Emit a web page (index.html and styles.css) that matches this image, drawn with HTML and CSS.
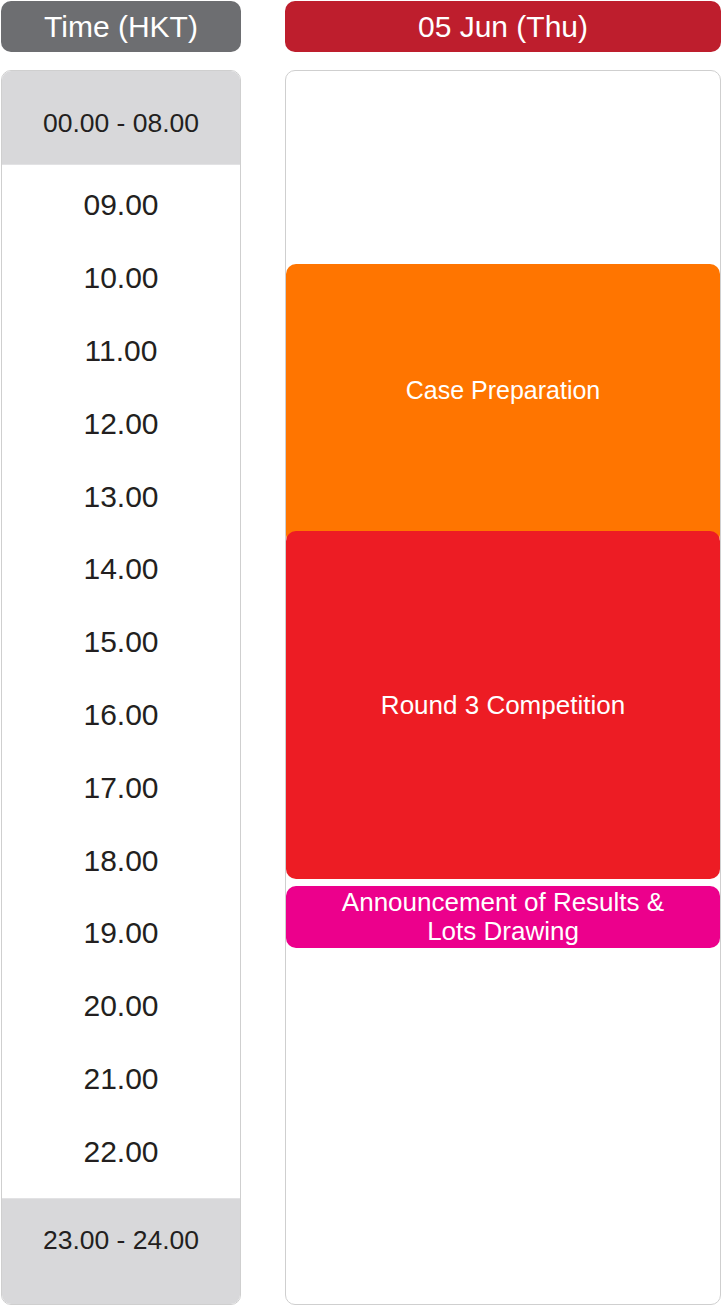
FILE: index.html
```html
<!DOCTYPE html>
<html lang="en">
<head>
<meta charset="utf-8">
<title>Schedule</title>
<link rel="stylesheet" href="styles.css">
</head>
<body>
<div class="schedule">
  <div class="head head-time">Time (HKT)</div>
  <div class="head head-day">05 Jun (Thu)</div>

  <div class="col col-time">
    <div class="range range-top">00.00 - 08.00</div>
    <div class="hours">
      <div class="hour">09.00</div>
      <div class="hour">10.00</div>
      <div class="hour">11.00</div>
      <div class="hour">12.00</div>
      <div class="hour">13.00</div>
      <div class="hour">14.00</div>
      <div class="hour">15.00</div>
      <div class="hour">16.00</div>
      <div class="hour">17.00</div>
      <div class="hour">18.00</div>
      <div class="hour">19.00</div>
      <div class="hour">20.00</div>
      <div class="hour">21.00</div>
      <div class="hour">22.00</div>
    </div>
    <div class="range range-bottom">23.00 - 24.00</div>
  </div>

  <div class="col col-day">
    <div class="event event-orange" style="top:193px;height:281px;">Case Preparation</div>
    <div class="event event-red" style="top:460px;height:348px;">Round 3 Competition</div>
    <div class="event event-pink" style="top:815px;height:62px;">Announcement of Results &amp;<br>Lots Drawing</div>
  </div>
</div>
</body>
</html>
```

FILE: styles.css
```css
html, body {
  margin: 0;
  padding: 0;
  background: #ffffff;
}

body {
  font-family: "Liberation Sans", Arial, sans-serif;
  width: 722px;
  height: 1306px;
  overflow: hidden;
}

.schedule {
  display: grid;
  grid-template-columns: 240px 436px;
  grid-template-rows: 51px 1235px;
  column-gap: 44px;
  row-gap: 18px;
  padding: 1px 0 0 1px;
}

.head {
  display: flex;
  align-items: center;
  justify-content: center;
  border-radius: 10px;
  color: #ffffff;
  font-size: 30px;
  line-height: 1;
}

.head-time {
  background: #6d6e71;
}

.head-day {
  background: #be1e2d;
}

.col {
  box-sizing: border-box;
  border: 1px solid #cfcfcf;
  border-radius: 10px;
  overflow: hidden;
  background: #ffffff;
}

.col-time {
  display: flex;
  flex-direction: column;
  color: #231f20;
}

.range {
  box-sizing: border-box;
  display: flex;
  align-items: center;
  justify-content: center;
  background: #d8d8da;
  font-size: 26.5px;
  line-height: 1;
}

.range-top {
  height: 94px;
  padding-top: 12px;
  border-bottom: 1px solid #e2e2e4;
}

.range-bottom {
  height: 106px;
  padding-bottom: 22px;
  border-top: 1px solid #e2e2e4;
}

.hours {
  flex: 1;
  padding-top: 4px;
}

.hour {
  height: 72.8px;
  display: flex;
  align-items: center;
  justify-content: center;
  font-size: 30px;
  line-height: 1;
}

.col-day {
  position: relative;
}

.event {
  position: absolute;
  left: 0;
  right: 0;
  box-sizing: border-box;
  display: flex;
  align-items: center;
  justify-content: center;
  text-align: center;
  border-radius: 10px;
  color: #ffffff;
  font-size: 26px;
  line-height: 29px;
}

.event-orange {
  background: #ff7500;
  padding-bottom: 29px;
  font-size: 25px;
}

.event-red {
  background: #ed1c24;
}

.event-pink {
  background: #ec008c;
}
```
